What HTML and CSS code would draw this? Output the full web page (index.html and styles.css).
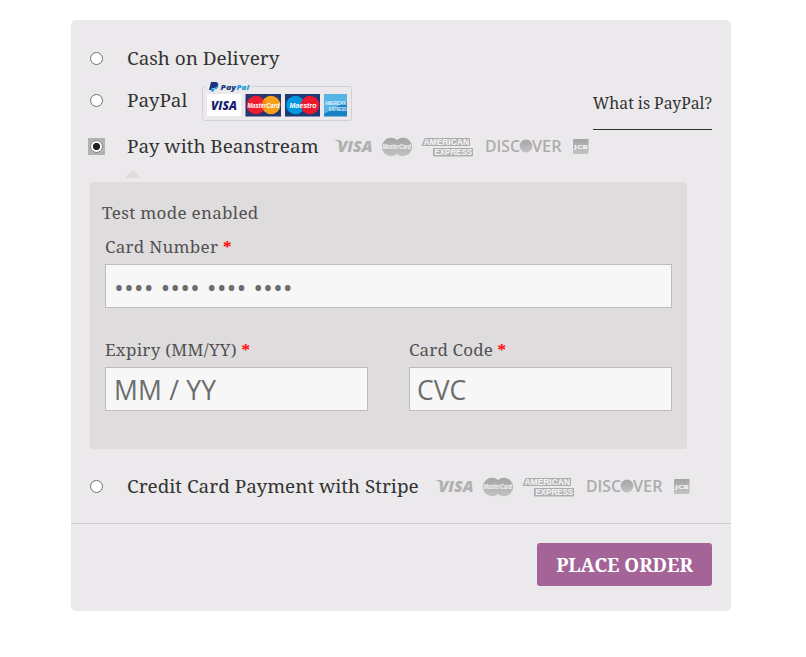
FILE: index.html
```
<!DOCTYPE html>
<html lang="en">
<head>
<meta charset="utf-8">
<title>Checkout</title>
<link rel="stylesheet" href="styles.css">
</head>
<body>
<svg class="defs" width="0" height="0" aria-hidden="true">
  <defs>
    <linearGradient id="silver" x1="0" y1="0" x2="0" y2="1"><stop offset="0" stop-color="#a5a4a5"/><stop offset="1" stop-color="#c4c3c4"/></linearGradient>
    <symbol id="cards" viewBox="0 0 256 22">
      <g font-family="Open Sans, sans-serif" fill="url(#silver)">
        <path d="M0 4h6l2 5Q5 5 0 4z" fill="#adacad"/>
        <text x="3.500" y="16" font-size="16.500" font-weight="800" font-style="italic" fill="#b1b0b1" textLength="35" lengthAdjust="spacingAndGlyphs">VISA</text>
        <path d="M63 4a9.200 9.200 0 1 0 0 14 9.200 9.200 0 1 0 0-14z"/>
        <text x="48.500" y="13.300" font-family="Liberation Sans, sans-serif" font-size="6.500" font-weight="700" font-style="italic" fill="#f6f5f6" textLength="28.500" lengthAdjust="spacingAndGlyphs">MasterCard</text>
        <path d="M91 2.500h44.500v7H88zM99.500 12.500h39v7.500h-39z" fill="#b8b7b8" stroke="#a3a2a3" stroke-width=".8"/>
        <g font-family="Liberation Sans, sans-serif" font-size="8.800" font-weight="700" fill="#f6f5f6"><text x="89.500" y="9.200" textLength="45.500" lengthAdjust="spacingAndGlyphs">AMERICAN</text><text x="100.500" y="19.400" textLength="37.500" lengthAdjust="spacingAndGlyphs">EXPRESS</text></g>
        <g font-size="16.500" font-weight="600" fill="#adacad"><text x="151" y="16" textLength="35" lengthAdjust="spacingAndGlyphs">DISC</text><text x="198" y="16" textLength="29.500" lengthAdjust="spacingAndGlyphs">VER</text></g>
        <circle cx="192" cy="10" r="6.400"/>
        <path d="M240 3h14.500V17a1 1 0 0 1-1 1H239V4a1 1 0 0 1 1-1z"/>
        <text x="240" y="12.500" font-size="5.500" font-weight="800" fill="#efeeef" textLength="14" lengthAdjust="spacingAndGlyphs">JCB</text>
      </g>
    </symbol>
  </defs>
</svg>
<form class="payment">
  <div class="methods">
    <label class="method"><span class="radio"></span><span class="name">Cash on Delivery</span></label>
    <div class="method">
      <span class="radio"></span><span class="name">PayPal</span>
      <svg class="mark" viewBox="0 0 150 41" width="150" height="41" font-family="Open Sans, sans-serif" font-weight="800" font-style="italic">
        <rect x=".5" y="5.500" width="149" height="34" rx="2" fill="#ebe9eb" stroke="#d1d0d5"/>
        <path d="M4 2h44v8H4z" fill="#ebe9eb"/>
        <path d="M9 1h5q3 .5 2 4-1 2-4 2h-2l-.6 2H7z" fill="#1c3380"/><path d="M15.500 3q1.500 1 .7 3-1 2.500-4 2.500l-.5 2H9l.7-3h2.500q3 0 3.300-4.500z" fill="#159bd7"/>
        <text x="18.500" y="8.500" font-size="7.500" fill="#253b80" textLength="15.500" lengthAdjust="spacingAndGlyphs">Pay</text><text x="34.500" y="8.500" font-size="7.500" fill="#179bd7" textLength="12.500" lengthAdjust="spacingAndGlyphs">Pal</text>
        <path d="M5 13h34v22H5z" fill="#fff"/><text x="9" y="28.500" font-size="13" fill="#1a1f71" textLength="26" lengthAdjust="spacingAndGlyphs">VISA</text>
        <path d="M43.500 13H79v22.500H43.500z" fill="#26366f"/><circle cx="69" cy="24" r="9.300" fill="#f9a01b"/><circle cx="54" cy="24" r="9.300" fill="#ed1c2e"/><path d="M61.500 18.500a9.300 9.300 0 0 1 0 11 9.300 9.300 0 0 1 0-11z" fill="#f48020"/><text x="45.500" y="26.500" font-family="Liberation Sans, sans-serif" font-size="7" fill="#fff" textLength="32" lengthAdjust="spacingAndGlyphs">MasterCard</text>
        <path d="M83 13h35v22.500H83z" fill="#1d3a78"/><circle cx="93.500" cy="24" r="9.300" fill="#0099df"/><circle cx="108" cy="24" r="9.300" fill="#ed1730"/><text x="87.500" y="26.500" font-family="Liberation Sans, sans-serif" font-size="7" fill="#fff" textLength="27" lengthAdjust="spacingAndGlyphs">Maestro</text>
        <path d="M122 13h23v22.500h-23z" fill="#1683c6"/><path d="M122 13h23v7l-23 13z" fill="#55b5e5"/><g fill="#e7f4fb" font-family="Liberation Sans, sans-serif" font-size="4.500" font-style="normal"><text x="123" y="23.500" textLength="21" lengthAdjust="spacingAndGlyphs">AMERICAN</text><text x="127" y="29.500" textLength="17.500" lengthAdjust="spacingAndGlyphs">EXPRESS</text></g>
      </svg>
      <a class="about">What is PayPal?</a>
    </div>
    <div class="method selected"><span class="radio checked"></span><span class="name">Pay with Beanstream</span><svg class="cards" width="256" height="22"><use href="#cards"/></svg></div>
    <section class="box">
      <p class="notice">Test mode enabled</p>
      <label class="field"><span class="label">Card Number <b>*</b></span><span class="input dots">•••• •••• •••• ••••</span></label>
      <div class="pair">
        <label class="field"><span class="label">Expiry (MM/YY) <b>*</b></span><span class="input expiry">MM / YY</span></label>
        <label class="field"><span class="label code">Card Code <b>*</b></span><span class="input cvc">CVC</span></label>
      </div>
    </section>
    <div class="method stripe"><span class="radio"></span><span class="name">Credit Card Payment with Stripe</span><svg class="cards" width="256" height="22"><use href="#cards"/></svg></div>
  </div>
  <footer class="actions"><button type="button" class="order">PLACE ORDER</button></footer>
</form>
</body>
</html>
```
FILE: styles.css
```
* { box-sizing: border-box; }
body { margin: 0; padding: 20px 75px 0 71px; background: #fff; color: #333; font-family: "Noto Serif", "Droid Serif", "DejaVu Serif", serif; }
.defs { display: block; height: 0; }
.payment { width: 660px; height: 591px; background: #ebe9eb; border-radius: 5px; }
.methods { height: 504px; padding: 17px 19px 0; border-bottom: 1px solid #cfcdd1; }
.method { display: flex; align-items: center; height: 42px; }
.radio { flex: none; width: 13px; height: 13px; margin-right: 24px; border: 1px solid #707070; border-radius: 50%; background: #fff; }
.radio.checked { position: relative; isolation: isolate; margin-top: 1px; background: radial-gradient(circle, #222 0 3.2px, #fff 4px); }
.radio.checked::before { content: ""; position: absolute; inset: -3px; z-index: -1; background: radial-gradient(circle, transparent 6.2px, #b2b1b2 6.8px); }
.name { flex: none; font-size: 18.96px; line-height: 28px; white-space: nowrap; }
.mark { flex: none; margin: 3px 0 0 15px; }
.about { margin: 22px 0 0 auto; height: 37px; border-bottom: 1px solid #333; font-size: 15.8px; line-height: 20px; white-space: nowrap; }
.selected { height: 49px; }
.selected .name { padding-top: 1px; }
.cards { flex: none; margin: 1px 0 0 16px; }
.selected .cards { margin: 2px 0 0 15px; }
.box { position: relative; width: 597px; height: 267px; margin-top: 12px; padding: 18px 15px 0; background: #dfdcde; border-radius: 3px; color: #515151; }
.box::before { content: ""; position: absolute; left: 35px; top: -12px; border: 8px solid transparent; border-top: 0; border-bottom-color: #dfdcde; }
.notice { margin: 0 0 0 -3px; font-size: 17px; line-height: 26px; letter-spacing: .3px; }
.field { display: block; }
.label { display: block; height: 26px; font-size: 17px; line-height: 26px; letter-spacing: .27px; white-space: nowrap; }
.label.code { letter-spacing: .15px; }
.notice + .field { margin-top: 8px; }
.notice + .field .label { height: 30px; }
.label b { color: #f00; font-weight: 700; }
.input { display: block; height: 44px; padding-left: 8px; border: 1px solid #c0b9c0; background: #f7f7f7; color: #6d6d6d; font: 26.5px/43px "Open Sans", "Noto Sans", sans-serif; white-space: pre; }
.input.dots { font-size: 26.3px; line-height: 45px; }
.input.expiry { letter-spacing: .2px; line-height: 44px; }
.input.cvc { padding-left: 7px; line-height: 44px; }
.pair { display: grid; grid-template-columns: 263px 263px; gap: 41px; margin-top: 29px; }
.pair .label { height: 30px; }
.stripe { height: 74px; }
.actions { display: flex; justify-content: flex-end; padding: 19px 19px 0; }
.order { width: 175px; height: 43px; padding: 1px 0 0; border: 0; border-radius: 3px; background: #a46497; color: #fff; font: 700 18.9px/43px "Noto Serif", "Droid Serif", "DejaVu Serif", serif; white-space: nowrap; }
```
